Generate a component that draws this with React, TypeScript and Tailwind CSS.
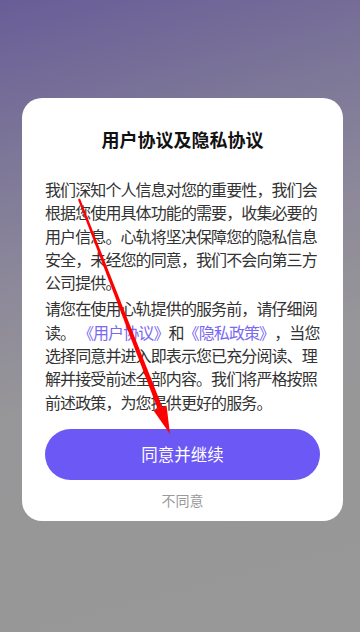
import React from "react";

const para1 = [
  "我们深知个人信息对您的重要性，我们会",
  "根据您使用具体功能的需要，收集必要的",
  "用户信息。心轨将坚决保障您的隐私信息",
  "安全，未经您的同意，我们不会向第三方",
  "公司提供。",
];

export default function App() {
  return (
    <div
      className="relative h-[632px] w-[360px] overflow-hidden bg-[linear-gradient(165deg,#695d98_0%,#7d7798_22%,#8d899a_40%,#979698_58%,#989898_100%)] pt-[98px] pl-[22px]"
      style={{ fontFamily: '"Noto Sans CJK SC", "Noto Sans", sans-serif' }}
    >
      <div className="w-[321px] rounded-[20px] bg-white px-[23px] pt-[27px] pb-[11px]">
        <h1 className="text-center text-[18px] font-bold leading-[28px] text-[#111]">
          用户协议及隐私协议
        </h1>
        <div className="mt-[25px] text-[16px] leading-[23.3px] tracking-[-0.9px] text-[#333]">
          <div>
            {para1.map((l) => (
              <div key={l} className="whitespace-nowrap">
                {l}
              </div>
            ))}
          </div>
          <div className="mt-[3px]">
            <div className="whitespace-nowrap">请您在使用心轨提供的服务前，请仔细阅</div>
            <div className="whitespace-nowrap [text-spacing-trim:space-all]">
              读。 <span className="text-[#7a68f2]">《用户协议》</span>和
              <span className="text-[#7a68f2]">《隐私政策》</span>，当您
            </div>
            <div className="whitespace-nowrap">选择同意并进入即表示您已充分阅读、理</div>
            <div className="whitespace-nowrap">解并接受前述全部内容。我们将严格按照</div>
            <div className="whitespace-nowrap">前述政策，为您提供更好的服务。</div>
          </div>
        </div>
        <button className="mt-[15px] flex h-[51px] w-full items-center justify-center rounded-full bg-[#6c58f5] text-[16.5px] text-white">
          同意并继续
        </button>
        <div className="mt-[10px] text-center text-[14px] leading-[20px] text-[#9a9a9a]">
          不同意
        </div>
      </div>

      <svg
        className="pointer-events-none absolute inset-0"
        width="360"
        height="632"
        viewBox="0 0 360 632"
      >
        <polygon
          points="78,199.4 80,198.6 162.3,407.1 157.7,408.9"
          fill="#ff0000"
        />
        <polygon points="170,434 153.5,410.5 166.5,405.5" fill="#ff0000" />
      </svg>
    </div>
  );
}
